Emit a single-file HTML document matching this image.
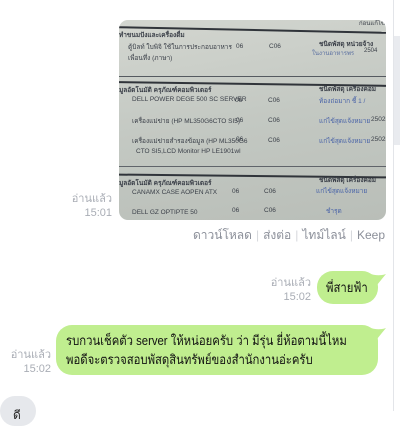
<!DOCTYPE html>
<html><head><meta charset="utf-8"><style>
body{margin:0;width:400px;height:411px;background:#fff;position:relative;overflow:hidden;font-family:"Liberation Sans","Noto Sans CJK SC",sans-serif}
.a{position:absolute}
.sb{left:393px;top:0;width:7px;height:411px;border-left:1px solid #e3e5e9;background:#fff}
.th{left:394px;top:36px;width:6px;height:109px;background:#e9ebef}
.ts{color:#a9adb5;font-size:11px;text-align:right;line-height:14px}
.photo{left:119px;top:20px;width:267px;height:200px;border-radius:9px;overflow:hidden;background:linear-gradient(170deg,#d3d6d0,#c3c8c2 50%,#b9beb8);}
.photo div{position:absolute;font-size:6.5px;color:#3a3f48;white-space:nowrap}
.ln{height:2px;background:#30343a;left:0;width:267px}
.bub{background:#c0ee8f;border-radius:16px;color:#111;font-size:13px}
.links{right:15px;top:226px;font-size:12px;color:#8b8f99}
.links span{color:#d5d7dc;margin:0 4px}
</style></head><body>
<div class="a sb"></div><div class="a th"></div>

<div class="a photo">
 <div style="left:240px;top:-2px;font-size:6px">ก่อนแก้ไข</div>
 <div class="ln" style="top:9px;transform:rotate(1.2deg)"></div>
 <div style="left:0;top:10px;font-weight:bold">ทำขนมปังและเครื่องดื่ม</div>
 <div style="left:9px;top:22px">ตู้บิลท์ ใบพิจิ ใช้ในการประกอบอาหาร</div>
 <div style="left:117px;top:23px">06</div><div style="left:150px;top:23px">C06</div>
 <div style="left:200px;top:19px;font-weight:bold">ชนิดพัสดุ หน่วยจ้าง</div>
 <div style="left:193px;top:28px;color:#5a6fa0;font-size:6px">ในงานอาหารพร</div>
 <div style="left:245px;top:28px;font-size:6px">2504</div>
 <div style="left:9px;top:33px">เพื่อนทึ่ง (ภาษา)</div>
 <div class="ln" style="top:56px;background:#555a60;height:1px"></div>
 <div class="ln" style="top:63px;transform:rotate(.8deg)"></div>
 <div style="left:0;top:65px;font-weight:bold">มูลอัตโนมัติ ครุภัณฑ์คอมพิวเตอร์</div>
 <div style="left:200px;top:64px;font-weight:bold">ชนิดพัสดุ เครื่องคอม</div>
 <div style="left:13px;top:76px">DELL POWER DEGE 500 SC SERVER</div>
 <div style="left:116px;top:77px">06</div><div style="left:149px;top:77px">C06</div>
 <div style="left:200px;top:76px;color:#4a64a8">ท้องถ่อมาก ชี้ 1 /</div>
 <div style="left:13px;top:96px">เครื่องแม่ข่าย (HP ML350G6CTO SI5)</div>
 <div style="left:117px;top:97px">06</div><div style="left:149px;top:97px">C06</div>
 <div style="left:200px;top:96px;color:#4a64a8">แก่ไข้สุดแจ้งหมาย</div>
 <div style="left:252px;top:96px">2502</div>
 <div style="left:13px;top:116px">เครื่องแม่ข่ายสำรองข้อมูล (HP ML350G6</div>
 <div style="left:117px;top:116px">06</div><div style="left:149px;top:117px">C06</div>
 <div style="left:200px;top:116px;color:#4a64a8">แก่ไข้สุดแจ้งหมาย</div>
 <div style="left:252px;top:116px">2502</div>
 <div style="left:17px;top:128px">CTO SI5,LCD Monitor HP LE1901wl</div>
 <div class="ln" style="top:146px;background:#60646a;height:1px"></div>
 <div class="ln" style="top:155px;transform:rotate(.6deg)"></div>
 <div style="left:0;top:158px;font-weight:bold">มูลอัตโนมัติ ครุภัณฑ์คอมพิวเตอร์</div>
 <div style="left:200px;top:155px;font-weight:bold">ชนิดพัสดุ เครื่องคอม</div>
 <div style="left:13px;top:169px">CANAMX CASE AOPEN ATX</div>
 <div style="left:113px;top:168px">06</div><div style="left:145px;top:168px">C06</div>
 <div style="left:197px;top:166px;color:#4a64a8">แก่ไข้สุดแจ้งหมาย</div>
 <div style="left:13px;top:189px">DELL GZ OPTIPTE 50</div>
 <div style="left:113px;top:187px">06</div><div style="left:145px;top:187px">C06</div>
 <div style="left:207px;top:186px;color:#4a64a8">ชำรุด</div>
</div>
<div class="a ts" style="left:60px;top:192px;width:52px">อ่านแล้ว<br>15:01</div>
<div class="a links">ดาวน์โหลด<span>|</span>ส่งต่อ<span>|</span>ไทม์ไลน์<span>|</span>Keep</div>

<div class="a ts" style="left:260px;top:276px;width:51px">อ่านแล้ว<br>15:02</div>
<div class="a bub" style="left:317px;top:271px;width:61px;height:33px;line-height:33px"><span style="position:absolute;left:9px;transform:scaleX(.87);transform-origin:left;white-space:nowrap">พี่สายฟ้า</span></div>
<svg class="a" style="left:368px;top:271px" width="20" height="16"><path d="M0 2 Q10 6 18 3 Q13 9 9 14 L0 14Z" fill="#c0ee8f"/></svg>

<div class="a ts" style="left:0;top:348px;width:51px">อ่านแล้ว<br>15:02</div>
<div class="a bub" style="left:56px;top:325px;width:322px;height:50px"><div style="position:absolute;left:10px;top:6px;line-height:19px;white-space:nowrap;transform:scaleX(.87);transform-origin:left">รบกวนเช็คตัว server ให้หน่อยครับ ว่า มีรุ่น ยี่ห้อตามนี้ไหม<br>พอดีจะตรวจสอบพัสดุสินทรัพย์ของสำนักงานอ่ะครับ</div></div>
<svg class="a" style="left:368px;top:325px" width="20" height="16"><path d="M0 2 Q10 6 18 3 Q13 9 9 14 L0 14Z" fill="#c0ee8f"/></svg>

<div class="a" style="left:0;top:396px;width:36px;height:30px;border-radius:15px;background:#e6e8ec"></div>
<div class="a" style="left:13px;top:406px;font-size:12px;color:#222">ดี</div>
</body></html>
